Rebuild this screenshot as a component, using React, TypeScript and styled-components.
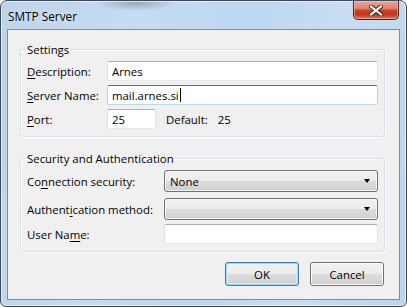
import React from "react";
import styled, { createGlobalStyle } from "styled-components";

const FS = "11.4px";

const Global = createGlobalStyle`
  html, body { margin: 0; padding: 0; background: #ffffff; }
  body { font-family: "Segoe UI", "Open Sans", "Noto Sans", sans-serif; }
`;

const Window = styled.div`
  box-sizing: border-box;
  width: 407px;
  height: 307px;
  border: 1px solid #3b4a5c;
  border-radius: 7px 7px 6px 6px;
  padding: 0 6px 6px 6px;
  display: flex;
  flex-direction: column;
  background:
    radial-gradient(ellipse 40px 8px at 135px 2px, rgba(90, 105, 125, 0.45), rgba(90, 105, 125, 0) 100%),
    linear-gradient(100deg, #bcd3ea 0%, #c6dcf2 30%, #bed6ee 55%, #c9def3 75%, #bcd4ec 100%);
  box-shadow: inset 0 0 0 1px rgba(255, 255, 255, 0.55);
  overflow: hidden;
`;

const TitleBar = styled.div`
  height: 28px;
  display: flex;
  align-items: flex-start;
  justify-content: space-between;
`;

const Title = styled.div`
  font-size: 11.8px;
  line-height: 15px;
  color: #000;
  margin-top: 8px;
  margin-left: 1px;
  text-shadow: 0 0 6px rgba(255, 255, 255, 0.9);
`;

const CloseButton = styled.div`
  box-sizing: border-box;
  width: 46px;
  height: 19px;
  margin-right: 1px;
  border: 1px solid #5a1e12;
  border-top: none;
  border-radius: 0 0 5px 5px;
  background: linear-gradient(#e9a99a 0%, #dd7c65 45%, #c8432a 50%, #c0391d 75%, #d77a5c 100%);
  box-shadow: inset 0 0 0 1px rgba(255, 220, 210, 0.45);
  display: flex;
  align-items: center;
  justify-content: center;
`;

const Client = styled.div`
  flex: 1;
  background: #f0f0f0;
  border: 1px solid #7d8ea3;
  display: flex;
  flex-direction: column;
  padding: 12px 14px 0 12px;
`;

const Group = styled.fieldset<{ $gapTop?: number }>`
  margin: ${(p) => p.$gapTop ?? 0}px 0 0 0;
  padding: 4px 6px 7px 4px;
  border: 1px solid #d5dfe5;
  border-radius: 3px;
  box-shadow: inset 1px 1px 0 #ffffff, 1px 1px 0 #ffffff;
  min-inline-size: 0;
`;

const Legend = styled.legend`
  padding: 0 2px;
  margin: 0;
  font-size: ${FS};
  line-height: 15px;
  color: #000;
`;

const Form = styled.div<{ $labelWidth: number }>`
  display: grid;
  grid-template-columns: ${(p) => p.$labelWidth}px 1fr;
  align-items: center;
  padding-left: 2px;
`;

const Label = styled.div<{ $mt?: number }>`
  font-size: ${FS};
  line-height: 15px;
  color: #000;
  white-space: nowrap;
  margin-top: ${(p) => p.$mt ?? 0}px;
  u { text-decoration: underline; text-underline-offset: 2px; }
`;

const Cell = styled.div<{ $mt?: number }>`
  display: flex;
  align-items: center;
  margin-top: ${(p) => p.$mt ?? 0}px;
`;

const TextBox = styled.div<{ $focused?: boolean; $width?: number }>`
  box-sizing: border-box;
  height: 20px;
  ${(p) => (p.$width ? `width: ${p.$width}px;` : "flex: 1;")}
  background: #fff;
  border: 1px solid;
  border-color: ${(p) =>
    p.$focused ? "#3d7bad #b5cfe7 #b7d9ed #b5cfe7" : "#abadb3 #e2e3ea #e3e9ef #dbdfe6"};
  border-radius: 2px;
  padding: 0 4px;
  display: flex;
  align-items: center;
  font-size: ${FS};
  line-height: 15px;
  color: #000;
  white-space: nowrap;
`;

const Caret = styled.span`
  display: inline-block;
  width: 1px;
  height: 14px;
  background: #000;
  margin-left: 1px;
`;

const Combo = styled.div`
  box-sizing: border-box;
  flex: 1;
  height: 22px;
  border: 1px solid #707070;
  border-radius: 3px;
  background: linear-gradient(#f2f2f2 0%, #ebebeb 50%, #dddddd 50%, #cfcfcf 100%);
  box-shadow: inset 0 0 0 1px rgba(252, 252, 252, 0.8);
  display: flex;
  align-items: center;
  justify-content: space-between;
  padding: 0 7px 0 5px;
  font-size: ${FS};
  line-height: 15px;
  color: #000;
`;

const Arrow = styled.span`
  width: 0;
  height: 0;
  border-left: 3.5px solid transparent;
  border-right: 3.5px solid transparent;
  border-top: 4px solid #000;
`;

const DefaultText = styled.span<{ $ml: number }>`
  font-size: ${FS};
  line-height: 15px;
  color: #000;
  margin-left: ${(p) => p.$ml}px;
`;

const ButtonRow = styled.div`
  display: flex;
  justify-content: flex-end;
  gap: 11px;
  margin-top: 10px;
  padding-right: 1px;
`;

const Button = styled.div<{ $default?: boolean; $width: number }>`
  box-sizing: border-box;
  width: ${(p) => p.$width}px;
  height: 24px;
  border: 1px solid ${(p) => (p.$default ? "#3c7fb1" : "#707070")};
  border-radius: 3px;
  background: linear-gradient(#f2f2f2 0%, #ebebeb 50%, #dddddd 50%, #cfcfcf 100%);
  box-shadow: ${(p) =>
    p.$default
      ? "inset 0 0 0 1px #9ad7f5, inset 0 0 0 2px rgba(230, 246, 253, 0.6)"
      : "inset 0 0 0 1px #fcfcfc"};
  display: flex;
  align-items: center;
  justify-content: center;
  font-size: ${FS};
  line-height: 15px;
  color: #000;
`;

export default function App() {
  return (
    <>
      <Global />
      <Window>
        <TitleBar>
          <Title>SMTP Server</Title>
          <CloseButton>
            <svg width="14" height="11" viewBox="0 0 14 11">
              <path d="M2 1.5 L12 9.5 M12 1.5 L2 9.5" stroke="#3a2a28" strokeWidth="4.2" strokeLinecap="square" fill="none" />
              <path d="M2 1.5 L12 9.5 M12 1.5 L2 9.5" stroke="#ffffff" strokeWidth="2.2" strokeLinecap="square" fill="none" />
            </svg>
          </CloseButton>
        </TitleBar>
        <Client>
          <Group>
            <Legend>Settings</Legend>
            <Form $labelWidth={80}>
              <Label><u>D</u>escription:</Label>
              <Cell><TextBox>Arnes</TextBox></Cell>
              <Label $mt={4}><u>S</u>erver Name:</Label>
              <Cell $mt={4}><TextBox $focused>mail.arnes.si<Caret /></TextBox></Cell>
              <Label $mt={4}><u>P</u>ort:</Label>
              <Cell $mt={4}>
                <TextBox $width={49}>25</TextBox>
                <DefaultText $ml={10}>Default:</DefaultText>
                <DefaultText $ml={10}>25</DefaultText>
              </Cell>
            </Form>
          </Group>
          <Group $gapTop={14}>
            <Legend>Security and Authentication</Legend>
            <Form $labelWidth={137}>
              <Label>Co<u>n</u>nection security:</Label>
              <Cell><Combo>None<Arrow /></Combo></Cell>
              <Label $mt={6}>Authent<u>i</u>cation method:</Label>
              <Cell $mt={6}><Combo><span /><Arrow /></Combo></Cell>
              <Label $mt={4}>User Na<u>m</u>e:</Label>
              <Cell $mt={4}><TextBox /></Cell>
            </Form>
          </Group>
          <ButtonRow>
            <Button $default $width={74}>OK</Button>
            <Button $width={74}>Cancel</Button>
          </ButtonRow>
        </Client>
      </Window>
    </>
  );
}
